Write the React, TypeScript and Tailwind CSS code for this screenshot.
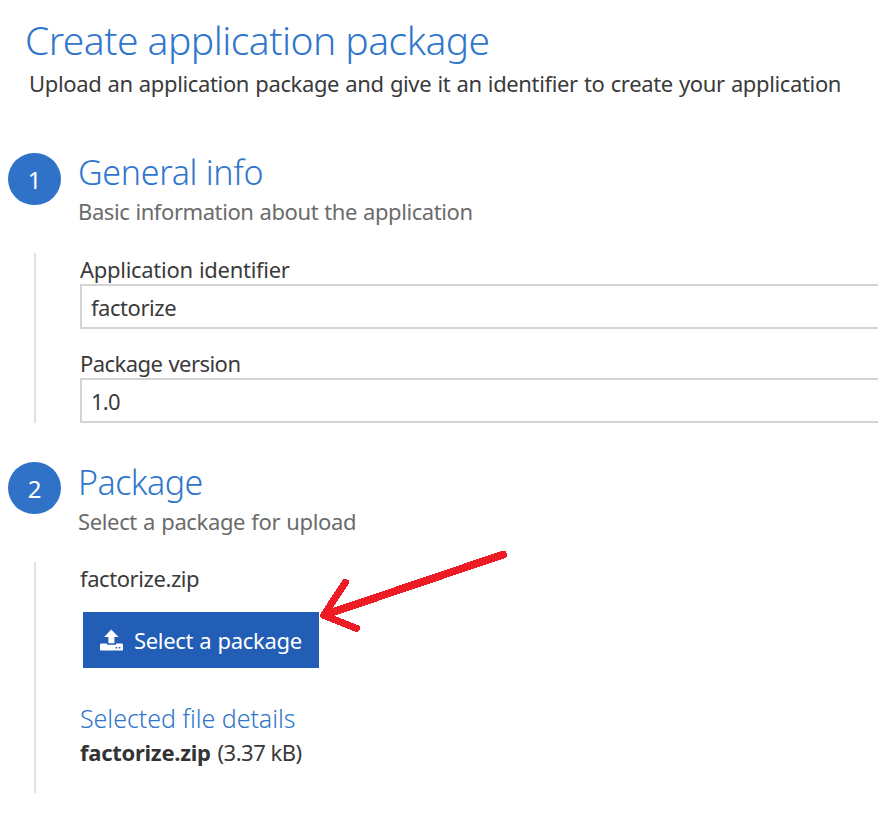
import type { ReactNode } from 'react';

function StepHeader({ number, title, subtitle, titleClass, subtitleClass }: {
  number: number;
  title: string;
  subtitle: string;
  titleClass: string;
  subtitleClass: string;
}) {
  return (
    <div className="flex h-[79px] gap-[17px] pl-2">
      <div className="mt-1 flex h-[52px] w-[53px] shrink-0 items-center justify-center rounded-full bg-[#2f72c7] pt-px text-2xl text-white">
        {number}
      </div>
      <div className="whitespace-nowrap">
        <h2 className={`h-[46px] text-[34px]/[46px] font-light text-[#2f76cc] ${titleClass}`}>{title}</h2>
        <p className={`h-[30px] text-[22px]/[30px] text-[#6b6b6b] ${subtitleClass}`}>{subtitle}</p>
      </div>
    </div>
  );
}

function StepBody({ className, children }: { className: string; children: ReactNode }) {
  return (
    <div className={`ml-[34px] border-l-2 border-[#e1e1e1] pl-11 ${className}`}>{children}</div>
  );
}

function Field({ label, value, labelClass, valueClass }: {
  label: string;
  value: string;
  labelClass: string;
  valueClass: string;
}) {
  return (
    <label className="block">
      <span className={`block h-[30px] text-[22px]/[30px] ${labelClass}`}>{label}</span>
      <input
        type="text"
        defaultValue={value}
        className={`block h-[45px] w-[820px] border-2 border-[#d4d4d4] bg-white pr-2 pl-[9px] text-[22px] outline-none ${valueClass}`}
      />
    </label>
  );
}

function UploadIcon() {
  return (
    <svg width="23" height="23" viewBox="0 0 23 23" fill="currentColor" aria-hidden="true">
      <path d="M11.2 0.6 L18.6 8 H14.4 V14.2 H8.4 V8 H4.2 Z" />
      <path
        fillRule="evenodd"
        d="M1.3 14.6 H7 V15.8 H16 V14.6 H21.7 Q23 14.6 23 16 V20.4 Q23 21.6 21.7 21.6 H1.3 Q0 21.6 0 20.4 V16 Q0 14.6 1.3 14.6 Z M15.6 18 H17.2 V19.5 H15.6 Z M18.8 18 H20.4 V19.5 H18.8 Z"
      />
    </svg>
  );
}

export default function App() {
  return (
    <main className="relative h-[819px] w-[878px] overflow-hidden bg-white font-['Noto_Sans',sans-serif] text-[#3a3a3a]">
      <header className="whitespace-nowrap pt-[15px]">
        <h1 className="ml-[25px] h-[50px] text-[39px]/[50px] font-light tracking-[-0.52px] text-[#2f76cc]">
          Create application package
        </h1>
        <p className="ml-[29px] mt-[3px] h-[30px] text-[22px]/[30px] tracking-[-0.36px] [word-spacing:0.8px]">
          Upload an application package and give it an identifier to create your application
        </p>
      </header>

      <section className="mt-[51px]">
        <StepHeader
          number={1}
          title="General info"
          subtitle="Basic information about the application"
          titleClass="tracking-[-0.3px]"
          subtitleClass="mt-px tracking-[-0.42px] [word-spacing:0.8px]"
        />
        <StepBody className="mt-[25px] h-[170px] overflow-hidden pt-px">
          <Field
            label="Application identifier"
            value="factorize"
            labelClass="tracking-[-0.29px] [word-spacing:0.8px]"
            valueClass="tracking-[-0.45px]"
          />
          <div className="h-[19px]" />
          <Field
            label="Package version"
            value="1.0"
            labelClass="tracking-[-0.54px] [word-spacing:0.8px]"
            valueClass="tracking-[-0.8px]"
          />
        </StepBody>
      </section>

      <section className="mt-[35px]">
        <StepHeader
          number={2}
          title="Package"
          subtitle="Select a package for upload"
          titleClass="relative top-px tracking-[-0.55px]"
          subtitleClass="mt-0.5 tracking-[-0.36px] [word-spacing:0.8px]"
        />
        <StepBody className="mt-[25px] h-[231px] pt-px">
          <p className="h-[30px] text-[22px]/[30px] tracking-[-0.42px]">factorize.zip</p>
          <button
            type="button"
            className="ml-[3px] mt-[19px] flex h-14 w-[236px] items-center gap-[11px] bg-[#235eb6] pl-[17px] text-[22px]/[30px] tracking-[-0.32px] whitespace-nowrap text-white [word-spacing:0.8px]"
          >
            <UploadIcon />
            <span>Select a package</span>
          </button>
          <h3 className="mt-[33px] h-[34px] text-[25px]/[34px] font-light tracking-[-0.05px] text-[#2f76cc]">
            Selected file details
          </h3>
          <p className="mt-0.5 h-[30px] text-[22px]/[30px] whitespace-nowrap">
            <strong className="font-bold tracking-[-0.27px] text-[#333333]">factorize.zip</strong>{' '}
            <span className="ml-px tracking-[-0.5px]">(3.37 kB)</span>
          </p>
        </StepBody>
      </section>

      {/* Arrow drawn over the form, pointing at the button */}
      <svg
        className="pointer-events-none absolute left-[310px] top-[540px]"
        width="210"
        height="100"
        viewBox="0 0 210 100"
        fill="none"
        stroke="#ed1c24"
        strokeLinecap="round"
        strokeLinejoin="round"
        shapeRendering="crispEdges"
        aria-hidden="true"
      >
        <path strokeWidth="7.8" d="M193 14.6 L14.5 75" />
        <path strokeWidth="7.2" d="M35.4 42.5 L13.7 75.3 L46.3 88.3" />
      </svg>
    </main>
  );
}
